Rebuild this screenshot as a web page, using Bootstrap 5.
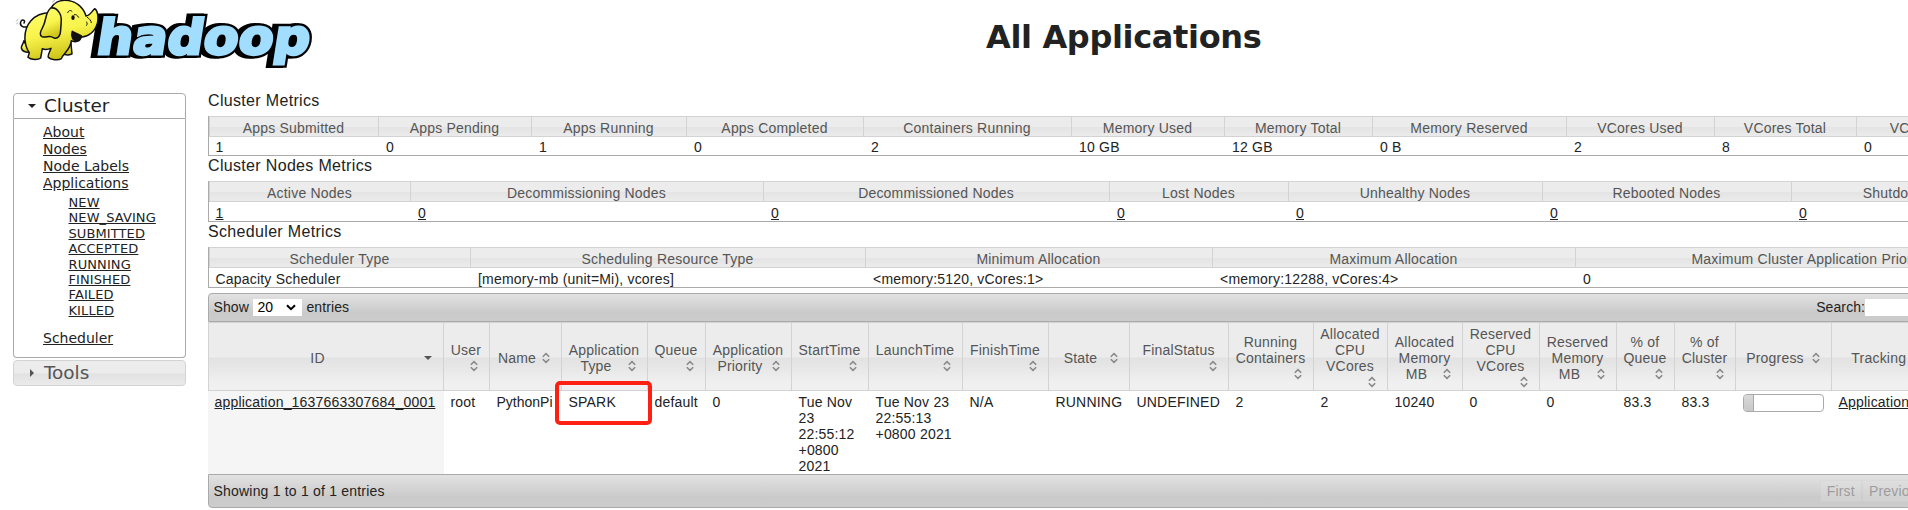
<!DOCTYPE html>
<html lang="en">
<head>
<meta charset="utf-8">
<title>All Applications</title>
<link href="https://cdn.jsdelivr.net/npm/bootstrap@5.3.0/dist/css/bootstrap.min.css" rel="stylesheet">
<style>
body{font:14px/16px "Liberation Sans",Arial,sans-serif;letter-spacing:.2px;color:#222;background:#fff;overflow:hidden;height:510px}
a{color:#222}
a:hover{color:#000}
.masthead{height:91px}
.logo-box{width:330px}
h1{font:bold 32px/40px "DejaVu Sans",Verdana,sans-serif;letter-spacing:-.35px;margin:17px 0 0 656px;white-space:nowrap}
.side{width:173px;margin-left:13px;padding-top:2px;font-family:"DejaVu Sans",Verdana,sans-serif;letter-spacing:0}
.acc-head{height:26px;font-size:18.4px;line-height:24px;border:1px solid #aaa;border-radius:4px;padding-left:10px}
.acc-head.on{border-radius:4px 4px 0 0}
.acc-head.off{margin-top:2px;color:#555;border-color:#d3d3d3;background:linear-gradient(#ececec 0 50%,#e2e2e2 53%,#eaeaea)}
.acc-head svg{width:16px;height:16px;margin-right:4px}
.acc-body{height:239px;border:1px solid #aaa;border-top:0;border-radius:0 0 4px 4px;padding:5px 0 0 29px;font-size:14px;line-height:17px}
.acc-body ul{list-style:none;margin:0;padding:0}
.acc-body ul ul{padding:3px 0 0 25.5px;font-size:13px;line-height:15.4px;letter-spacing:.1px}
.acc-body .gap-top{margin-top:12px}
.main{margin-left:22px;min-width:0;overflow:hidden}
.cap{font-size:16px;line-height:20px;height:25px;letter-spacing:.33px}
.grid-t{table-layout:fixed;border-collapse:separate;border-spacing:0}
.grid-t th{font-weight:400;color:#555;text-align:center;border:solid #d3d3d3;border-width:1px 1px 1px 0;background:linear-gradient(#ececec 0 50%,#e2e2e2 53%,#f0f0f0 90%);vertical-align:middle}
.grid-t th:first-child{border-left-width:1px}
.info{border:solid #aaa;border-width:0 0 1px 1px}
.info th{height:21px;padding:3px 7px 0 6px;line-height:16px;white-space:nowrap;background:linear-gradient(#ececec 0 50%,#e4e4e4 55%,#ebebeb)}
.info th:first-child{border-left:1px solid #d3d3d3}
.info td{height:18px;padding:1px 0 0 7px;white-space:nowrap;line-height:16px}
.info td:first-child{padding-left:6.5px}
.info.tall td{height:19px;padding-top:3px}
.info.last td{padding-top:2px}
.m1{width:1830px}.m2{width:1837px}.m3{width:1836px}
.bar{border:1px solid #aaa;background:linear-gradient(#e2e2e2,#cacaca 70%,#ccc);width:1850px}
.bar.top{height:29px;margin-top:5px;border-radius:4px 4px 0 0;padding:0 0 1px 4.5px;letter-spacing:.1px}
.bar.bot{height:34px;border-radius:0 0 4px 4px;padding-left:4.5px}
.sel{width:49px;height:17px;background:#fff;margin:0 4px 0 4.5px;padding:0 6px 0 4px;color:#000;line-height:17px}
.find{margin-left:1467px}
.find-in{width:150px;height:17px;background:#fff;border:0}
.pager{margin-left:1435px;color:#222;opacity:.3}
.pager span{border:1px solid #d3d3d3;background:#e6e6e6;height:22px;line-height:20px;padding:0 6px}
.apps{width:1754px}
.apps th{height:69px;line-height:16px;padding:2px 7px 0 6px}
.apps td{height:83px;vertical-align:top;padding:3px 0 0 6.5px;line-height:16px}
.apps td:first-child{background:#f5f5f5;white-space:nowrap}
.apps .tight{letter-spacing:0}
.apps .srt{float:right;width:16px;height:16px;display:block}
.pbar{width:81px;height:18px;border:1px solid #aaa;border-radius:4px;overflow:hidden}
.pbar div{height:16px;border-right:1px solid #aaa;background:linear-gradient(#d9d9d9,#c8c8c8)}
.mark-wrap{position:relative}
.mark-red{position:absolute;left:-14px;top:-13px;width:97px;height:44px;border:4px solid #fd2013;border-radius:5px}
</style>
</head>
<body>
<svg class="d-none"><defs>
<symbol id="so" viewBox="0 0 16 16"><path d="M4.8 6.8 8 3.6l3.2 3.2M4.8 9.2 8 12.4l3.2-3.2" fill="none" stroke="#888" stroke-width="1.5"/></symbol>
<symbol id="dn" viewBox="0 0 16 16"><path d="M4 6h8l-4 4z" fill="currentColor"/></symbol>
<symbol id="rt" viewBox="0 0 16 16"><path d="M6 4v8l4-4z" fill="currentColor"/></symbol>
</defs></svg>

<header class="masthead d-flex">
 <div class="logo-box">
 <svg width="330" height="75" viewBox="0 0 330 75">
  <defs><linearGradient id="y" x1="0" y1="0" x2="0.3" y2="1"><stop offset="0" stop-color="#ffff78"/><stop offset=".6" stop-color="#f8f44c"/><stop offset="1" stop-color="#cfc51b"/></linearGradient></defs>
  <g font-family="DejaVu Sans" font-weight="bold" font-size="48" stroke-linejoin="miter" stroke-miterlimit="3" transform="translate(95 54) skewX(-9)">
   <text x="-4" y="0" textLength="213" lengthAdjust="spacingAndGlyphs" fill="#000" stroke="#000" stroke-width="8">hadoop</text>
   <text x="0" y="0" textLength="213" lengthAdjust="spacingAndGlyphs" fill="#000" stroke="#000" stroke-width="7.5">hadoop</text>
   <text x="0" y="0" textLength="213" lengthAdjust="spacingAndGlyphs" fill="#a1ddff" stroke="#a1ddff" stroke-width="3">hadoop</text>
  </g>
  <g transform="scale(.3333)" stroke="#111" stroke-width="4.5" stroke-linejoin="round" stroke-linecap="round" fill="url(#y)">
   <path d="M84 80c-14 4-26-2-22-14 4-10 16-5 10 3" fill="none"/>
   <path d="M72 122c-2 10-8 14-8 22 2 10 14 14 24 12z"/>
   <path d="M188 160c8 6 22 6 28 2l-4-40-24 10z"/>
   <path d="M150 38C100 38 72 75 75 120c2 20 7 30 13 38l-4 14c8 8 31 8 38 2l5-28c8 4 18 2 26-1-3 10-11 20-8 27 7 8 30 10 39 4 6-16 28-26 30-54 11 6 26 3 29-10 22-2 42-17 49-42 5-20 0-40-8-44-9 9-16 22-26 22-8-28-33-47-63-47-25 0-43 14-45 37z"/>
   <path d="M152 24c-18 16-12 38-24 58-8 14-10 24-2 28 16 4 22-6 36 4 12 4 20-8 20-24 2-28 4-40-4-52-6-10-14-16-26-14z"/>
   <path d="M262 52c6 4 12 10 12 16M260 66c2 4 2 7 0 10M236 52c-4-6-8-10-13-8M203 38c4-8 9-8 13-4" fill="none" stroke-width="3"/>
   <path d="M217 94c8 6 18 8 27 14-2 14-18 20-26 8-3-6-4-14-1-22z" fill="#111"/>
   <ellipse cx="219" cy="53" rx="5" ry="7" fill="#111" stroke="none"/>
   <path d="M49 63l6-6M50 72l3-4M157 6l8-6M162 12l8-7" fill="none" stroke-width="2" stroke="#888"/>
  </g>
 </svg>
 </div>
 <h1>All Applications</h1>
</header>

<div class="d-flex">
<aside class="side flex-shrink-0">
 <div class="acc-head on d-flex align-items-center"><svg><use href="#dn"/></svg>Cluster</div>
 <div class="acc-body">
  <ul>
   <li><a href="#">About</a></li><li><a href="#">Nodes</a></li><li><a href="#">Node Labels</a></li>
   <li><a href="#">Applications</a>
    <ul><li><a href="#">NEW</a></li><li><a href="#">NEW_SAVING</a></li><li><a href="#">SUBMITTED</a></li><li><a href="#">ACCEPTED</a></li><li><a href="#">RUNNING</a></li><li><a href="#">FINISHED</a></li><li><a href="#">FAILED</a></li><li><a href="#">KILLED</a></li></ul></li>
   <li class="gap-top"><a href="#">Scheduler</a></li>
  </ul>
 </div>
 <div class="acc-head off d-flex align-items-center"><svg><use href="#rt"/></svg>Tools</div>
</aside>

<main class="main flex-grow-1">
 <div class="cap">Cluster Metrics</div>
 <table class="grid-t info m1">
  <colgroup><col width="170"><col width="153"><col width="155"><col width="177"><col width="208"><col width="153"><col width="148"><col width="194"><col width="148"><col width="142"><col width="181"></colgroup>
  <tr><th>Apps Submitted</th><th>Apps Pending</th><th>Apps Running</th><th>Apps Completed</th><th>Containers Running</th><th>Memory Used</th><th>Memory Total</th><th>Memory Reserved</th><th>VCores Used</th><th>VCores Total</th><th>VCores Reserved</th></tr>
  <tr><td>1</td><td>0</td><td>1</td><td>0</td><td>2</td><td>10 GB</td><td>12 GB</td><td>0 B</td><td>2</td><td>8</td><td>0</td></tr>
 </table>
 <div class="cap">Cluster Nodes Metrics</div>
 <table class="grid-t info tall m2">
  <colgroup><col width="202"><col width="353"><col width="346"><col width="179"><col width="254"><col width="249"><col width="253"></colgroup>
  <tr><th>Active Nodes</th><th>Decommissioning Nodes</th><th>Decommissioned Nodes</th><th>Lost Nodes</th><th>Unhealthy Nodes</th><th>Rebooted Nodes</th><th>Shutdown Nodes</th></tr>
  <tr><td><a href="#">1</a></td><td><a href="#">0</a></td><td><a href="#">0</a></td><td><a href="#">0</a></td><td><a href="#">0</a></td><td><a href="#">0</a></td><td><a href="#">0</a></td></tr>
 </table>
 <div class="cap">Scheduler Metrics</div>
 <table class="grid-t info tall last m3">
  <colgroup><col width="262"><col width="395"><col width="347"><col width="363"><col width="468"></colgroup>
  <tr><th>Scheduler Type</th><th>Scheduling Resource Type</th><th>Minimum Allocation</th><th>Maximum Allocation</th><th>Maximum Cluster Application Priority</th></tr>
  <tr><td>Capacity Scheduler</td><td>[memory-mb (unit=Mi), vcores]</td><td>&lt;memory:5120, vCores:1&gt;</td><td>&lt;memory:12288, vCores:4&gt;</td><td>0</td></tr>
 </table>

 <div class="bar top d-flex align-items-center text-nowrap">
  Show<span class="sel d-flex align-items-center justify-content-between flex-shrink-0">20<svg width="10" height="7" viewBox="0 0 10 7"><path d="M1 1.2l4 4 4-4" fill="none" stroke="#000" stroke-width="2"/></svg></span>entries
  <label class="find d-flex align-items-center">Search:<input class="find-in"></label>
 </div>
 <table class="grid-t apps">
  <colgroup><col width="236"><col width="46"><col width="72"><col width="86"><col width="58"><col width="86"><col width="77"><col width="94"><col width="86"><col width="81"><col width="99"><col width="85"><col width="74"><col width="75"><col width="77"><col width="77"><col width="58"><col width="61"><col width="96"><col width="130"></colgroup>
  <tr>
   <th>ID<svg class="srt"><use href="#dn"/></svg></th>
   <th>User<svg class="srt"><use href="#so"/></svg></th>
   <th>Name<svg class="srt"><use href="#so"/></svg></th>
   <th>Application Type<svg class="srt"><use href="#so"/></svg></th>
   <th>Queue<svg class="srt"><use href="#so"/></svg></th>
   <th>Application Priority<svg class="srt"><use href="#so"/></svg></th>
   <th>StartTime<svg class="srt"><use href="#so"/></svg></th>
   <th>LaunchTime<svg class="srt"><use href="#so"/></svg></th>
   <th>FinishTime<svg class="srt"><use href="#so"/></svg></th>
   <th>State<svg class="srt"><use href="#so"/></svg></th>
   <th>FinalStatus<svg class="srt"><use href="#so"/></svg></th>
   <th>Running Containers<svg class="srt"><use href="#so"/></svg></th>
   <th>Allocated CPU VCores<svg class="srt"><use href="#so"/></svg></th>
   <th>Allocated Memory MB<svg class="srt"><use href="#so"/></svg></th>
   <th>Reserved CPU VCores<br><svg class="srt"><use href="#so"/></svg></th>
   <th>Reserved Memory MB<svg class="srt"><use href="#so"/></svg></th>
   <th>% of Queue<svg class="srt"><use href="#so"/></svg></th>
   <th>% of Cluster<svg class="srt"><use href="#so"/></svg></th>
   <th>Progress<svg class="srt"><use href="#so"/></svg></th>
   <th class="text-nowrap">Tracking UI<svg class="srt"><use href="#so"/></svg></th>
  </tr>
  <tr>
   <td><a href="#">application_1637663307684_0001</a></td><td>root</td><td class="tight">PythonPi</td>
   <td><div class="mark-wrap">SPARK<span class="mark-red"></span></div></td>
   <td>default</td><td>0</td><td>Tue Nov<br>23<br>22:55:12<br>+0800<br>2021</td><td>Tue Nov 23<br>22:55:13<br>+0800 2021</td><td>N/A</td><td>RUNNING</td><td>UNDEFINED</td><td>2</td><td>2</td><td>10240</td><td>0</td><td>0</td><td>83.3</td><td>83.3</td>
   <td><div class="pbar"><div style="width:10px"></div></div></td>
   <td class="text-nowrap"><a href="#">ApplicationMaster</a></td>
  </tr>
 </table>
 <div class="bar bot d-flex align-items-center text-nowrap">
  <span>Showing 1 to 1 of 1 entries</span>
  <div class="pager d-flex"><span>First</span><span>Previous</span></div>
 </div>
</main>
</div>
<script src="https://cdn.jsdelivr.net/npm/bootstrap@5.3.0/dist/js/bootstrap.bundle.min.js"></script>
</body>
</html>
